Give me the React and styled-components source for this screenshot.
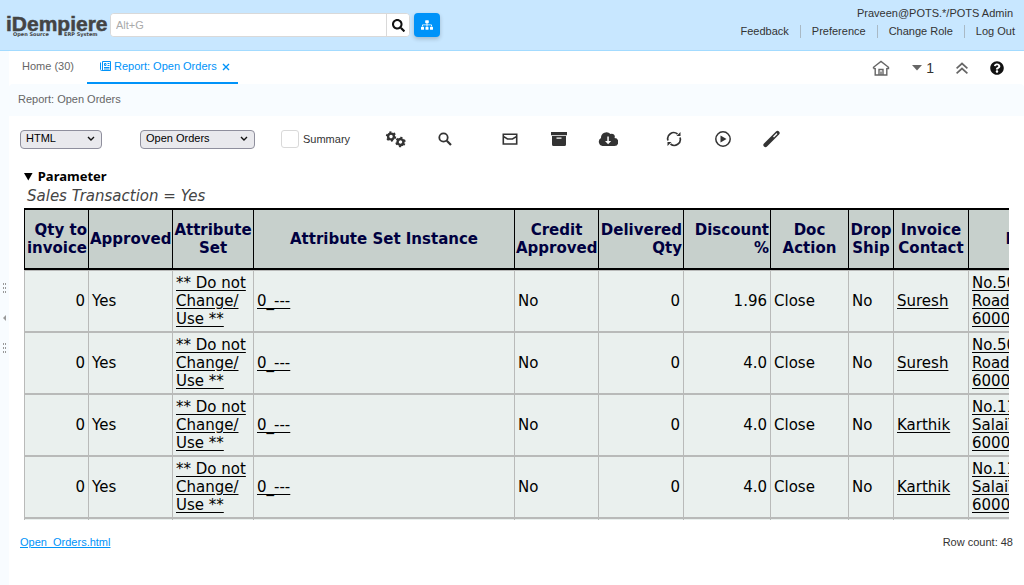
import React from "react";
import styled, { createGlobalStyle } from "styled-components";
import { FaSearch, FaSitemap, FaQuestionCircle } from "react-icons/fa";

const colors = {
  header: "#c8e7ff",
  headerLine: "#a3dbff",
  blue: "#0093f9",
  pale: "#f8fcff",
  text: "#333",
  icon: "#333",
};

const GlobalStyle = createGlobalStyle`
  * {
    box-sizing: border-box;
  }

  body {
    margin: 0;
    color: ${colors.text};
    background: #fff;
    font-family: "Liberation Sans", Arial, sans-serif;
    font-size: 11px;
  }

  button, input, select {
    font: inherit;
    color: inherit;
  }
`;

const Page = styled.div`
  display: flex;
  flex-direction: column;
  height: 100vh;
`;

const Header = styled.header`
  display: flex;
  align-items: center;
  height: 51px;
  padding: 0 9px 0 6px;
  background: ${colors.header};
  border-bottom: 1px solid ${colors.headerLine};
`;

const Logo = styled.svg`
  flex: none;
  width: 104px;
  height: 28px;
  fill: #444;
  font-family: "Liberation Sans", Arial, sans-serif;
  font-weight: bold;
`;

const SearchForm = styled.form`
  display: flex;
  flex: none;
  width: 300px;
  height: 24px;
  background: #fff;
  border: 1px solid #d9d9d9;
  border-radius: 4px;
  overflow: hidden;
`;

const SearchInput = styled.input`
  flex: 1;
  min-width: 0;
  padding: 0 5px;
  border: 0;
  outline: 0;

  &::placeholder {
    color: #aaa;
  }
`;

const SearchButton = styled.button`
  display: flex;
  align-items: center;
  justify-content: center;
  width: 23px;
  padding: 0;
  color: #111;
  font-size: 13px;
  background: #fff;
  border: 0;
  border-left: 1px solid #d9d9d9;
`;

const MenuButton = styled.button`
  display: flex;
  align-items: center;
  justify-content: center;
  width: 26px;
  height: 24px;
  margin-left: 4px;
  padding: 0;
  color: #fff;
  font-size: 12px;
  background: ${colors.blue};
  border: 0;
  border-radius: 4px;
  box-shadow: 0 2px 4px rgba(0, 0, 0, 0.2);
`;

const UserPanel = styled.div`
  display: flex;
  flex-direction: column;
  align-items: flex-end;
  gap: 5px;
  margin-left: auto;
  padding-bottom: 6px;
  line-height: 13px;
`;

const UserName = styled.div`
  padding-right: 2px;
`;

const UserLinks = styled.nav`
  display: flex;
`;

const UserLink = styled.a`
  padding: 0 11px;
  color: inherit;
  text-decoration: none;
  border-left: 1px solid #a9b9c5;

  &:first-child {
    border-left: 0;
  }

  &:last-child {
    padding-right: 0;
  }
`;

const Body = styled.div`
  display: flex;
  flex: 1;
  min-height: 0;
`;

const Splitter = styled.button`
  display: flex;
  flex-direction: column;
  align-items: center;
  justify-content: center;
  gap: 20px;
  width: 9px;
  padding: 0;
  background: ${colors.pale};
  border: 0;
`;

const SplitterMark = styled.svg`
  width: 5px;
  height: 10px;
  fill: #999;
`;

const Desktop = styled.main`
  display: flex;
  flex: 1;
  flex-direction: column;
  min-width: 0;
`;

const TabBar = styled.div`
  display: flex;
  height: 33px;
`;

const Tab = styled.button`
  display: flex;
  align-items: center;
  gap: 3px;
  padding: 0 13px 2px;
  color: ${(props) => (props.$active ? colors.blue : "#666")};
  background: none;
  border: 0;
  border-bottom: 2px solid ${(props) => (props.$active ? colors.blue : "transparent")};
`;

const CloseMark = styled.svg`
  width: 8px;
  height: 12px;
  margin: 2px -5px 0 2px;
`;

const TabTools = styled.div`
  display: flex;
  align-items: center;
  gap: 22px;
  margin-left: auto;
  padding-right: 20px;
`;

const TabTool = styled.button`
  display: flex;
  align-items: center;
  gap: 4px;
  padding: 0;
  color: ${(props) => (props.$dark ? "#111" : "#666")};
  font-size: 14px;
  background: none;
  border: 0;

  span {
    color: ${colors.text};
  }
`;

const Breadcrumb = styled.div`
  height: 32px;
  padding-left: 9px;
  color: #666;
  line-height: 31px;
  background: ${colors.pale};
  border-radius: 4px 4px 0 0;
`;

const Toolbar = styled.div`
  display: flex;
  align-items: center;
  height: 46px;
  padding-left: 11px;
`;

const Select = styled.select`
  width: ${(props) => props.$width}px;
  height: 19px;
  margin-right: 38px;
  padding: 0 5px 2px;
  color: #000;
  background: #e9e9ed
    url("data:image/svg+xml,%3Csvg xmlns='http://www.w3.org/2000/svg' width='8' height='6'%3E%3Cpath d='M1 1l3 3 3-3' fill='none' stroke='%23111' stroke-width='1.4'/%3E%3C/svg%3E")
    no-repeat right 6px center;
  border: 1px solid #8f8f9d;
  border-radius: 4px;
  appearance: none;
`;

const SummaryLabel = styled.label`
  display: flex;
  align-items: center;
  gap: 4px;
  margin-left: -12px;
`;

const Checkbox = styled.input`
  width: 18px;
  height: 18px;
  margin: 0;
  background: #fff;
  border: 1px solid #d9d9d9;
  border-radius: 3px;
  appearance: none;

  &:checked {
    background: ${colors.blue};
  }
`;

const ToolGroup = styled.div`
  display: flex;
  gap: 24px;
  margin-left: ${(props) => props.$gap}px;
`;

const ToolButton = styled.button`
  width: 25px;
  height: 24px;
  padding: 0;
  background: none;
  border: 0;

  svg {
    display: block;
    margin: 0 auto;
    fill: ${colors.icon};
  }
`;

const Report = styled.section`
  flex: 1;
  min-height: 0;
  margin-right: 15px;
  padding: 4px 0 0 15px;
  overflow: auto;
  scrollbar-width: none;
  font-family: "DejaVu Sans", sans-serif;
  font-size: 15px;
`;

const Parameters = styled.details`
  color: #444;
  font-style: italic;
  line-height: 20px;

  p {
    margin: 0 0 2px 3px;
  }
`;

const ParametersTitle = styled.summary`
  padding-left: 0;
  color: #000;
  font-family: "Noto Sans", "Open Sans", sans-serif;
  font-size: 13px;
  font-style: normal;
  font-weight: bold;
  line-height: 20px;
`;

const Table = styled.table`
  width: 1156px;
  table-layout: fixed;
  border-spacing: 0;
  color: #000;
  line-height: 18px;
`;

const HeadCell = styled.th`
  height: 62px;
  padding: 0 1px;
  color: #000040;
  text-align: ${(props) => props.$align || "center"};
  background: #c7d0cc;
  border: solid #000;
  border-width: 2px 0 2px 1px;
`;

const Cell = styled.td`
  height: 62px;
  padding: 0 3px;
  text-align: ${(props) => props.$align || "left"};
  background: #eaf0ee;
  border: solid #b9bab9;
  border-width: 1px 0 1px 1px;

  a {
    color: inherit;
    text-underline-offset: 2px;
  }
`;

const Footer = styled.footer`
  display: flex;
  justify-content: space-between;
  height: 65px;
  padding: 15px 11px 0;
  line-height: 14px;

  a {
    color: ${colors.blue};
  }
`;

const columns = [
  { title: "Qty to invoice", width: 64, align: "right" },
  { title: "Approved", width: 84 },
  { title: "Attribute Set", width: 81 },
  { title: "Attribute Set Instance", width: 261 },
  { title: "Credit Approved", width: 84 },
  { title: "Delivered Qty", width: 85, align: "right" },
  { title: "Discount %", width: 87, align: "right" },
  { title: "Doc Action", width: 78 },
  { title: "Drop Ship", width: 45 },
  { title: "Invoice Contact", width: 75 },
  { title: "Invoice Location" },
];

const orders = [
  { discount: "1.96", contact: "Suresh", location: ["No.50,", "Road,", "60001"] },
  { discount: "4.0", contact: "Suresh", location: ["No.50,", "Road,", "60001"] },
  { discount: "4.0", contact: "Karthik", location: ["No.11,", "SalaiT", "60001"] },
  { discount: "4.0", contact: "Karthik", location: ["No.11,", "SalaiT", "60001"] },
  { discount: "4.0", contact: "Karthik", location: ["No.11,", "SalaiT", "60001"] },
];

function Lines({ items }) {
  return (
    <a href="#record">
      {items.map((item, i) => (
        <React.Fragment key={item}>
          {i > 0 && <br />}
          {item}
        </React.Fragment>
      ))}
    </a>
  );
}

function HomeIcon() {
  return (
    <svg width="18" height="18" viewBox="0 0 18 18" fill="none" stroke="#666" strokeWidth="1.4">
      <path d="M1.500 9.500V8.300L9 2.500l7.500 5.800v1.200h-1.700M1.500 9.500h1.700M3.200 9V16h11.600V9M7 16v-5.500h4V16M9 12.500V16" />
    </svg>
  );
}

function CaretIcon() {
  return (
    <svg width="10" height="6" viewBox="0 0 10 6" fill="#666">
      <path d="M0 0h10L5 5.500z" />
    </svg>
  );
}

function DoubleUpIcon() {
  return (
    <svg width="12" height="12" viewBox="0 0 12 12" fill="none" stroke="#666" strokeWidth="1.7">
      <path d="M.6 6.300 6 1.500l5.400 4.800M.6 11.300 6 6.500l5.400 4.800" />
    </svg>
  );
}

function ReportIcon() {
  return (
    <svg width="11" height="12" viewBox="0 0 11 12" fill="none" stroke={colors.blue}>
      <path d="M2.500 1.500h8v9h-9a1 1 0 0 1-1-1v-7M2.500 1.500v9" />
      <path d="M4.500 3.500h1.500v2H4.500zM7.500 3.500h2M7.500 5.500h2M4 7.500h5.500M4 9h5.500" />
    </svg>
  );
}

function Gear({ x, y, turn = 0 }) {
  return (
    <g transform={`translate(${x} ${y}) rotate(${turn})`} fill="none" stroke="#333">
      <circle r="2.9" strokeWidth="2.4" />
      <circle r="4.300" strokeWidth="1.800" strokeDasharray="2.100 2.400" />
    </g>
  );
}

const tools = [
  {
    gap: 33,
    items: [
      {
        label: "Customize",
        icon: (
          <svg width="22" height="24" viewBox="0 0 22 24">
            <Gear x={6} y={9.5} />
            <Gear x={15.5} y={15} turn={20} />
          </svg>
        ),
      },
      {
        label: "Find",
        icon: (
          <svg width="16" height="24" viewBox="0 0 16 24">
            <circle cx="6.5" cy="10.5" r="4.2" fill="none" stroke="#333" strokeWidth="1.8" />
            <path d="M9.8 13.8 14 18" stroke="#333" strokeWidth="2.2" />
          </svg>
        ),
      },
    ],
  },
  {
    gap: 40,
    items: [
      {
        label: "Send mail",
        icon: (
          <svg width="16" height="24" viewBox="0 0 16 24">
            <path d="M1.300 7.300h13.400v9.700H1.300zM1.300 9.300 5.500 12h5l4.200-2.700" fill="none" stroke="#333" strokeWidth="1.600" />
          </svg>
        ),
      },
      {
        label: "Archive",
        icon: (
          <svg width="16" height="24" viewBox="0 0 16 24">
            <path d="M0 5h16v3.200H0zM1 9h14v8.500q0 1.500-1.500 1.500h-11Q1 19 1 17.500zM5.500 10.500v1.300h5v-1.300z" fillRule="evenodd" />
          </svg>
        ),
      },
      {
        label: "Export",
        icon: (
          <svg width="20" height="24" viewBox="0 0 20 24">
            <path d="M4.500 19A4.300 4.300 0 0 1 3 11 5.500 5.500 0 0 1 12.500 7a3 3 0 0 1 4 4 4 4 0 0 1-.500 8zM9.300 9.500v4.500H7l3.100 3.200 3.100-3.200h-2.400V9.500z" fillRule="evenodd" />
          </svg>
        ),
      },
    ],
  },
  {
    gap: 41,
    items: [
      {
        label: "Refresh",
        icon: (
          <svg width="16" height="24" viewBox="0 0 16 24">
            <path d="M2 13.500A6 6 0 0 1 11.500 7M14 10.500A6 6 0 0 1 4.500 17" fill="none" stroke="#333" strokeWidth="1.700" />
            <path d="M10.500 9h4V5zM5.500 15h-4v4z" />
          </svg>
        ),
      },
      {
        label: "Run process",
        icon: (
          <svg width="18" height="24" viewBox="0 0 18 24">
            <circle cx="9" cy="12" r="7.200" fill="none" stroke="#333" strokeWidth="1.500" />
            <path d="M6.500 8.500 12.500 12l-6 3.500z" />
          </svg>
        ),
      },
      {
        label: "Wizard",
        icon: (
          <svg width="18" height="24" viewBox="0 0 18 24">
            <path d="M2.500 18 14.500 6" stroke="#333" strokeWidth="4.200" strokeLinecap="round" />
            <path d="m10.500 10 3.500-3.500" stroke="#fff" strokeWidth="1.300" />
          </svg>
        ),
      },
    ],
  },
];

function AppHeader() {
  return (
    <Header>
      <Logo viewBox="0 0 104 28" role="img" aria-label="iDempiere">
        <text x="0" y="20" fontSize="21" stroke="#444" strokeWidth="0.500">iDempiere</text>
        <text x="7" y="25" fontSize="5" fontFamily="DejaVu Sans">Open Source</text>
        <text x="58" y="25" fontSize="5" fontFamily="DejaVu Sans">ERP System</text>
      </Logo>
      <SearchForm onSubmit={(e) => e.preventDefault()}>
        <SearchInput type="text" placeholder="Alt+G" aria-label="Search menu" />
        <SearchButton aria-label="Search">
          <FaSearch />
        </SearchButton>
      </SearchForm>
      <MenuButton aria-label="Menu">
        <FaSitemap />
      </MenuButton>
      <UserPanel>
        <UserName>Praveen@POTS.*/POTS Admin</UserName>
        <UserLinks>
          {["Feedback", "Preference", "Change Role", "Log Out"].map((name) => (
            <UserLink href="#user" key={name}>{name}</UserLink>
          ))}
        </UserLinks>
      </UserPanel>
    </Header>
  );
}

function SplitterDots() {
  return (
    <SplitterMark viewBox="0 0 5 10">
      <path d="M1 0h1v2H1zM3 0h1v2H3zM1 4h1v2H1zM3 4h1v2H3zM1 8h1v2H1zM3 8h1v2H3z" />
    </SplitterMark>
  );
}

function ReportTable() {
  return (
    <Table>
      <colgroup>
        {columns.map((column) => (
          <col key={column.title} width={column.width} />
        ))}
      </colgroup>
      <thead>
        <tr>
          {columns.map((column) => (
            <HeadCell key={column.title} $align={column.align}>{column.title}</HeadCell>
          ))}
        </tr>
      </thead>
      <tbody>
        {orders.map((order, i) => (
          <tr key={i}>
            <Cell $align="right">0</Cell>
            <Cell>Yes</Cell>
            <Cell><Lines items={["** Do not", "Change/", "Use **"]} /></Cell>
            <Cell><a href="#record">0_---</a></Cell>
            <Cell>No</Cell>
            <Cell $align="right">0</Cell>
            <Cell $align="right">{order.discount}</Cell>
            <Cell>Close</Cell>
            <Cell>No</Cell>
            <Cell><a href="#record">{order.contact}</a></Cell>
            <Cell><Lines items={order.location} /></Cell>
          </tr>
        ))}
      </tbody>
    </Table>
  );
}

export default function App() {
  return (
    <Page>
      <GlobalStyle />
      <AppHeader />
      <Body>
        <Splitter aria-label="Collapse panel">
          <SplitterDots />
          <SplitterMark viewBox="0 0 5 10"><path d="M4 2v6L1 5z" /></SplitterMark>
          <SplitterDots />
        </Splitter>
        <Desktop>
          <TabBar>
            <Tab>Home (30)</Tab>
            <Tab $active>
              <ReportIcon />
              <span>Report: Open Orders</span>
              <CloseMark viewBox="0 0 8 12" stroke={colors.blue} strokeWidth="1.4">
                <path d="m1 3 6 6M7 3 1 9" />
              </CloseMark>
            </Tab>
            <TabTools>
              <TabTool aria-label="Home"><HomeIcon /></TabTool>
              <TabTool><CaretIcon /><span>1</span></TabTool>
              <TabTool aria-label="Collapse header"><DoubleUpIcon /></TabTool>
              <TabTool $dark aria-label="Help"><FaQuestionCircle /></TabTool>
            </TabTools>
          </TabBar>
          <Breadcrumb>Report: Open Orders</Breadcrumb>
          <Toolbar>
            <Select $width={82} aria-label="Output type" defaultValue="HTML">
              <option>HTML</option>
              <option>PDF</option>
            </Select>
            <Select $width={115} aria-label="Print format" defaultValue="Open Orders">
              <option>Open Orders</option>
            </Select>
            <SummaryLabel>
              <Checkbox type="checkbox" />
              Summary
            </SummaryLabel>
            {tools.map((group) => (
              <ToolGroup key={group.gap} $gap={group.gap}>
                {group.items.map((item) => (
                  <ToolButton key={item.label} aria-label={item.label}>{item.icon}</ToolButton>
                ))}
              </ToolGroup>
            ))}
          </Toolbar>
          <Report>
            <Parameters open>
              <ParametersTitle>Parameter</ParametersTitle>
              <p>Sales Transaction = Yes</p>
            </Parameters>
            <ReportTable />
          </Report>
          <Footer>
            <a href="#download">Open_Orders.html</a>
            <span>Row count: 48</span>
          </Footer>
        </Desktop>
      </Body>
    </Page>
  );
}
